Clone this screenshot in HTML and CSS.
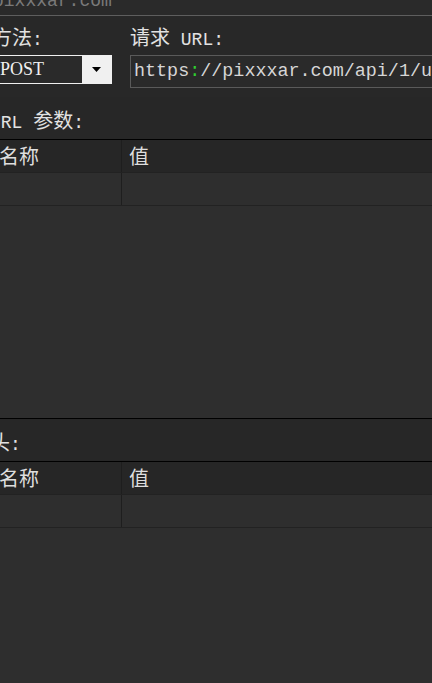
FILE: index.html
```html
<!DOCTYPE html>
<html lang="zh">
<head>
<meta charset="utf-8">
<title>请求</title>
<link rel="stylesheet" href="styles.css">
</head>
<body>
<div class="page">
  <div class="topbar"><span class="host">pixxxar.com</span></div>
  <div class="form">
    <div class="field method">
      <div class="label">方法<span class="lat">:</span></div>
      <div class="select">
        <span class="select-value">POST</span>
        <span class="select-btn"><svg width="9" height="5" viewBox="0 0 9 5"><polygon points="0,0 9,0 4.5,5" fill="#000"/></svg></span>
      </div>
    </div>
    <div class="field url">
      <div class="label">请求<span class="lat"> URL:</span></div>
      <div class="input">https<span class="sep">:</span>//pixxxar.com/api/1/users</div>
    </div>
  </div>
  <section class="section first">
    <div class="section-head"><span class="lat">URL </span>参数<span class="lat">:</span></div>
    <div class="row head"><div class="cell name">名称</div><div class="cell">值</div></div>
    <div class="row"><div class="cell name"></div><div class="cell"></div></div>
    <div class="empty"></div>
  </section>
  <section class="section second">
    <div class="section-head">头<span class="lat">:</span></div>
    <div class="row head"><div class="cell name">名称</div><div class="cell">值</div></div>
    <div class="row"><div class="cell name"></div><div class="cell"></div></div>
    <div class="empty tall"></div>
  </section>
</div>
</body>
</html>
```
FILE: styles.css
```css
html, body {
  margin: 0;
  padding: 0;
}
body {
  background: #2e2e2e;
  overflow: hidden;
  font-family: "Noto Sans CJK SC", sans-serif;
  color: #e2e2e2;
}
.page {
  margin-left: -10px;
  width: 480px;
}
.topbar {
  height: 15px;
  border-bottom: 1px solid #5e5e5e;
  background: #2a2a2a;
  overflow: hidden;
}
.host {
  display: block;
  margin-top: -8px;
  padding-left: 3px;
  font-family: "Liberation Mono", monospace;
  font-size: 18px;
  line-height: 18px;
  color: #7a7a7a;
}
.form {
  display: flex;
  gap: 18px;
  padding-top: 9px;
  padding-bottom: 9px;
  background: #282828;
}
.label {
  height: 24px;
  font-size: 20px;
  line-height: 24px;
  margin-bottom: 6px;
  white-space: nowrap;
}
.method .label {
  padding-left: 2px;
}
.lat {
  font-family: "Liberation Mono", monospace;
  font-size: 18px;
  white-space: pre;
}
.method {
  width: 122px;
}
.url {
  flex: 1;
}
.select {
  display: flex;
  width: 122px;
  height: 29px;
  box-sizing: border-box;
  border: 1px solid #f0f0f0;
  background: #2a2a2a;
}
.select-value {
  flex: 1;
  padding-left: 9px;
  font-family: "Liberation Serif", serif;
  font-size: 18px;
  line-height: 27px;
  color: #f0f0f0;
}
.select-btn {
  width: 29px;
  background: #f0f0f0;
  display: flex;
  align-items: center;
  justify-content: center;
}
.input {
  width: 320px;
  height: 33px;
  box-sizing: border-box;
  border: 1px solid #5a5a5a;
  background: #2a2a2a;
  padding-left: 3px;
  font-family: "Liberation Mono", monospace;
  font-size: 18.4px;
  line-height: 31px;
  color: #d6d6d6;
  white-space: nowrap;
  overflow: hidden;
}
.sep {
  color: #2fd02f;
}
.section-head {
  height: 31px;
  padding-top: 11px;
  background: #272727;
  border-bottom: 1px solid #000;
  font-size: 20px;
  line-height: 24px;
  white-space: nowrap;
}
.second .section-head {
  border-top: 1px solid #000;
}
.row {
  display: flex;
  height: 32px;
  border-bottom: 1px solid #222;
  background: #2e2e2e;
}
.row.head {
  background: #262626;
}
.cell {
  padding-left: 7px;
  font-size: 20px;
  line-height: 32px;
  color: #dedede;
}
.cell.name {
  width: 132px;
  box-sizing: border-box;
  padding-left: 9px;
  border-right: 1px solid #1e1e1e;
}
.empty {
  height: 212px;
  background: #2e2e2e;
}
.empty.tall {
  height: 200px;
}
```
